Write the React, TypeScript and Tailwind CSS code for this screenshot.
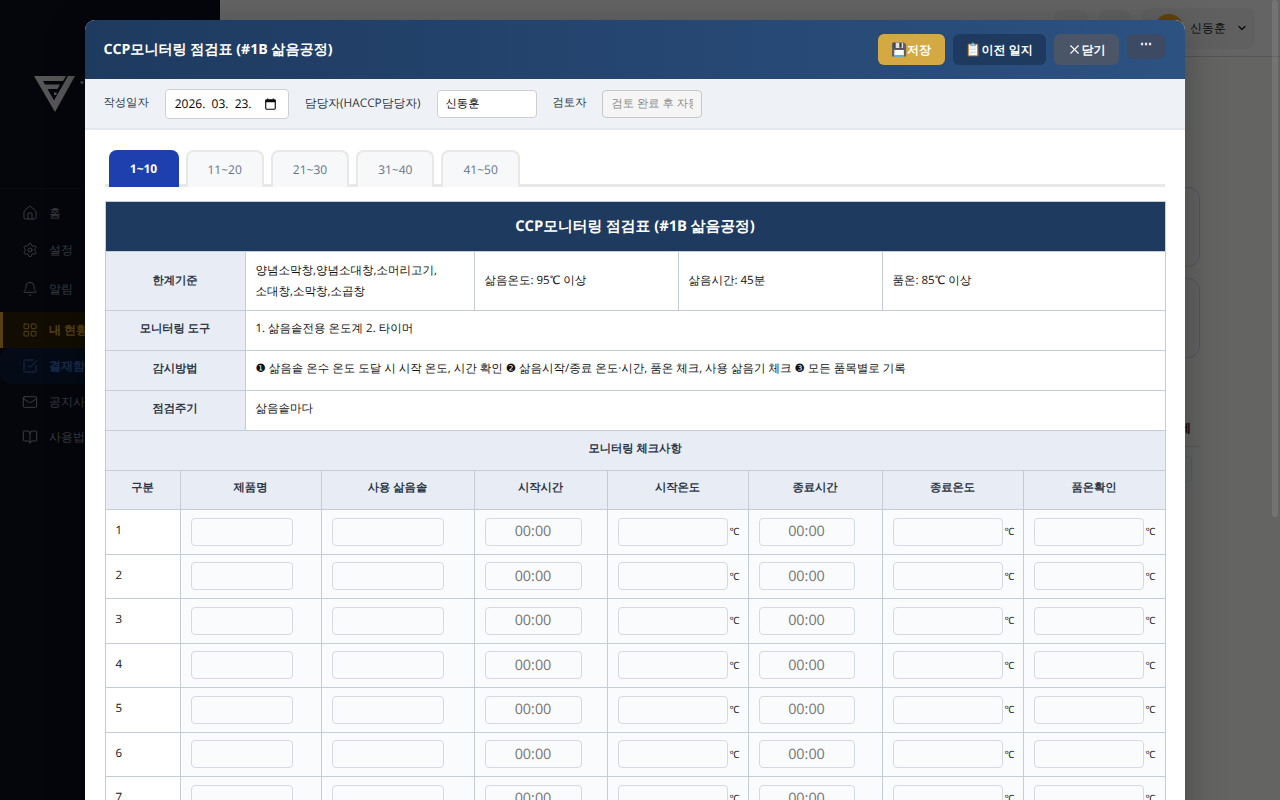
import { Bell, BookOpen, CheckSquare, ChevronDown, Home, LayoutGrid, Mail, Settings, X } from "lucide-react";

const navItems = [
  { label: "홈", icon: Home, top: "mt-0" },
  { label: "설정", icon: Settings, top: "mt-px" },
  { label: "알림", icon: Bell, top: "mt-[3px]" },
  { label: "내 현황", icon: LayoutGrid, top: "mt-[5px]", active: "amber" },
  { label: "결재함", icon: CheckSquare, top: "mt-0", active: "blue" },
  { label: "공지사항", icon: Mail, top: "mt-0" },
  { label: "사용법", icon: BookOpen, top: "mt-[-1px]" },
];

const tabs = ["1~10", "11~20", "21~30", "31~40", "41~50"];
const rows = [1, 2, 3, 4, 5, 6, 7, 8];

const crisp = "[text-rendering:geometricPrecision]";
const line = "border border-[#c4ccd6]";
const labelCell = `${line} bg-[#e8edf5] text-center text-[11.3px] font-semibold text-[#2d3748]`;
const bodyCell = `${line} bg-white px-2.5 text-left text-[11.5px] text-[#111]`;
const headCell = `${line} bg-[#e8edf5] pb-[3px] text-center text-[11.3px] font-semibold text-[#2d3748]`;
const inputCell = `${line} bg-[#fafbfc] px-2.5`;
const fieldClass = `h-7 rounded border border-[#d5dae2] bg-[#fafbfc] px-2 text-center text-[14.4px] outline-none placeholder:text-[#757575] ${crisp}`;

function Logo() {
  return (
    <svg width="50" height="38" viewBox="0 0 50 38">
      <path
        d="M0 0H32L29 5H9L11 8.5H26L23.5 13H13.5L20 24.5L34 0H41L21 36Z"
        fill="#d8d8d8"
      />
      <rect x="20" y="16.5" width="2.5" height="2.5" fill="#d8d8d8" />
      <path d="M46 5.5h4l-2 3z" fill="#d8d8d8" />
    </svg>
  );
}

function Sidebar() {
  return (
    <aside className="flex w-[220px] shrink-0 flex-col bg-[#0a1120]">
      <div className="flex h-[189px] items-start border-b border-[#182030] pt-[76px] pl-[34px]">
        <Logo />
      </div>
      <nav className="flex flex-col pt-[6px]">
        {navItems.map((item) => {
          const Icon = item.icon;
          let tone = "pl-[22px] text-[#8b929e]";
          if (item.active === "amber") tone = "border-l-[3px] border-[#d69e2e] bg-[#2e2207] pl-[19px] font-bold text-[#d69e2e]";
          if (item.active === "blue") tone = "rounded-l-xl bg-[#0c1c38] pl-[22px] font-bold text-[#3b6cc0]";
          return (
            <div key={item.label} className={`flex h-9 items-center gap-[11px] text-xs whitespace-nowrap ${item.top} ${tone}`}>
              <Icon size={16} strokeWidth={1.5} />
              {item.label}
            </div>
          );
        })}
      </nav>
    </aside>
  );
}

function Topbar() {
  return (
    <header className="flex h-[57px] items-center justify-end gap-2.5 border-b border-[#d6d6d4] bg-[#fbfbfa] pr-[25px]">
      <div className="h-9 w-[34px] rounded-lg bg-[#f1f1f0]" />
      <div className="h-9 w-[34px] rounded-lg bg-[#f1f1f0]" />
      <div className="flex h-[41px] w-[113px] items-center gap-[7px] rounded-lg bg-[#f1f1f0] pl-[13px]">
        <div className="h-7 w-7 shrink-0 rounded-full bg-[#f0a818]" />
        <span className="text-xs font-medium text-[#1a1a1a]">신동훈</span>
        <ChevronDown size={12} strokeWidth={2.5} className="ml-[3px] text-[#1a1a1a]" />
      </div>
    </header>
  );
}

function BackPage() {
  return (
    <div className="flex min-w-0 flex-1 flex-col">
      <Topbar />
      <main className="flex flex-col gap-[11px] pt-[130px] pr-[80px] pl-[40px]">
        <div className="h-[80px] rounded-xl border border-[#c9d4ea] bg-[#f7f8fb]" />
        <div className="h-[80px] rounded-xl border border-[#c9d4ea] bg-[#f7f8fb]" />
        <div className="mt-[51px] border-b border-[#e0e0de] pr-[9px] pb-2.5 text-right text-xs font-bold text-[#1a1a1a]">상세</div>
        <div className="-mt-[11px] flex h-[44px] items-center justify-end bg-[#f8f9fb] pr-2">
          <div className="h-[26px] w-10 rounded border border-[#e4e6ea]" />
        </div>
      </main>
    </div>
  );
}

function Celsius() {
  return (
    <div className="flex items-center gap-0.5 pl-2.5">
      <input className={`${fieldClass} w-[110px]`} />
      <span className="text-[10px] text-[#1a1a1a]">℃</span>
    </div>
  );
}

function CheckTable() {
  return (
    <table className="w-[1060px] table-fixed border-collapse">
      <colgroup>
        <col className="w-[75px]" />
        <col className="w-[65px]" />
        <col className="w-[76px]" />
        <col className="w-[153px]" />
        <col className="w-[133px]" />
        <col className="w-[71px]" />
        <col className="w-[70px]" />
        <col className="w-[134px]" />
        <col className="w-[141px]" />
        <col className="w-[142px]" />
      </colgroup>
      <tbody>
        <tr className="h-[50px]">
          <td colSpan={10} className={`${line} bg-[#1e3a5f] text-center text-[14.75px] font-bold text-white`}>
            CCP모니터링 점검표 (#1B 삶음공정)
          </td>
        </tr>
        <tr className="h-[59px]">
          <td colSpan={2} className={labelCell}>한계기준</td>
          <td colSpan={2} className={`${bodyCell} leading-[21px]`}>
            양념소막창,양념소대창,소머리고기,
            <br />
            소대창,소막창,소곱창
          </td>
          <td colSpan={2} className={bodyCell}>삶음온도: 95℃ 이상</td>
          <td colSpan={2} className={bodyCell}>삶음시간: 45분</td>
          <td colSpan={2} className={bodyCell}>품온: 85℃ 이상</td>
        </tr>
        <tr className="h-10">
          <td colSpan={2} className={`${labelCell} pb-[3px]`}>모니터링 도구</td>
          <td colSpan={8} className={`${bodyCell} pb-[3px]`}>1. 삶음솥전용 온도계 2. 타이머</td>
        </tr>
        <tr className="h-10">
          <td colSpan={2} className={`${labelCell} pb-[3px]`}>감시방법</td>
          <td colSpan={8} className={`${bodyCell} pb-[3px]`}>
            ❶ 삶음솥 온수 온도 도달 시 시작 온도, 시간 확인 ❷ 삶음시작/종료 온도·시간, 품온 체크, 사용 삶음기 체크 ❸ 모든 품목별로 기록
          </td>
        </tr>
        <tr className="h-10">
          <td colSpan={2} className={`${labelCell} pb-[3px]`}>점검주기</td>
          <td colSpan={8} className={`${bodyCell} pb-[3px]`}>삶음솥마다</td>
        </tr>
        <tr className="h-10">
          <td colSpan={10} className={headCell}>모니터링 체크사항</td>
        </tr>
        <tr className="h-[39px]">
          <td className={headCell}>구분</td>
          <td colSpan={2} className={headCell}>제품명</td>
          <td className={headCell}>사용 삶음솥</td>
          <td className={headCell}>시작시간</td>
          <td colSpan={2} className={headCell}>시작온도</td>
          <td className={headCell}>종료시간</td>
          <td className={headCell}>종료온도</td>
          <td className={headCell}>품온확인</td>
        </tr>
        {rows.map((n) => (
          <tr key={n} className="h-[44.5px]">
            <td className={`${line} bg-white px-2.5 pb-[2px] text-[11.5px] text-[#111]`}>{n}</td>
            <td colSpan={2} className={inputCell}>
              <input className={`${fieldClass} block w-[102px]`} />
            </td>
            <td className={inputCell}>
              <input className={`${fieldClass} block w-[112px]`} />
            </td>
            <td className={inputCell}>
              <input placeholder="00:00" className={`${fieldClass} block w-[97px]`} />
            </td>
            <td colSpan={2} className={`${line} bg-[#fafbfc]`}>
              <Celsius />
            </td>
            <td className={inputCell}>
              <input placeholder="00:00" className={`${fieldClass} block w-[96px]`} />
            </td>
            <td className={`${line} bg-[#fafbfc]`}>
              <Celsius />
            </td>
            <td className={`${line} bg-[#fafbfc]`}>
              <Celsius />
            </td>
          </tr>
        ))}
      </tbody>
    </table>
  );
}

function Modal() {
  return (
    <div className="absolute top-5 left-[84.5px] flex h-[860px] w-[1100px] flex-col overflow-hidden rounded-[10px] bg-white shadow-[0_10px_40px_rgba(0,0,0,0.3)]">
      <div className="flex h-[59px] shrink-0 items-start justify-between bg-gradient-to-r from-[#1e3a5f] to-[#2c5282] px-5">
        <h2 className="mt-5 -ml-px text-[14.1px] leading-5 font-bold text-white">CCP모니터링 점검표 (#1B 삶음공정)</h2>
        <div className="mt-[14px] flex items-start gap-2">
          <button className={`h-[31px] w-[67px] rounded-md bg-[#d4a843] text-xs font-bold text-white ${crisp}`}>
            <span className="text-[13px]">💾</span>저장
          </button>
          <button className={`h-[31px] w-[93px] rounded-md bg-[#1e3a5f] text-xs font-bold text-white ${crisp}`}>
            <span className="text-[13px]">📋</span>이전 일지
          </button>
          <button className={`flex h-[31px] w-[65px] items-center justify-center rounded-md bg-[#4a5568] text-xs font-bold text-white ${crisp}`}>
            <X size={15} strokeWidth={1.75} />
            닫기
          </button>
          <button className="h-[25px] w-[38px] rounded-md bg-[#3d4a63] pb-1.5 text-xs font-bold text-white">⋯</button>
        </div>
      </div>
      <div className="flex h-[51px] shrink-0 items-center border-b-2 border-[#e2e8f0] bg-[#eef2f7] pl-5 text-[11.3px] text-[#2d3748]">
        <span className="-ml-px">작성일자</span>
        <div className="ml-4 flex h-[30px] w-[124px] items-center justify-between rounded border border-[#cfcfcf] bg-white pr-3 pl-[9px] text-xs whitespace-pre text-black">
          {"2026.  03.  23."}
          <svg width="11" height="12" viewBox="0 0 12 13" fill="none" stroke="#000" strokeWidth="1.2">
            <rect x="0.8" y="1.8" width="10.4" height="10.4" rx="1" />
            <path d="M0.8 3.4H11.2" strokeWidth="2.4" />
            <path d="M3 0.4V2M9 0.4V2" />
          </svg>
        </div>
        <span className="ml-4 text-[11.8px]">담당자(HACCP담당자)</span>
        <input defaultValue="신동훈" className={`ml-4 h-7 w-[100px] rounded border border-[#cfcfcf] bg-white px-2 text-[11.3px] text-black ${crisp}`} />
        <span className="ml-4">검토자</span>
        <input
          disabled
          placeholder="검토 완료 후 자동"
          className={`ml-4 h-7 w-[100px] rounded border border-[#c8c8c8] bg-[#f5f5f5] px-2 text-[11.3px] placeholder:text-[#8a8a8a] ${crisp}`}
        />
      </div>
      <div className="flex min-h-0 flex-1 flex-col px-5 pt-5">
        <div className="flex h-[37px] shrink-0 items-end gap-[7px] border-b-[3px] border-[#e8e8e6] pl-1">
          {tabs.map((t, i) => (
            <div
              key={t}
              className={
                i === 0
                  ? "-mb-[3px] flex h-[37px] w-[70px] items-center justify-center rounded-t-lg bg-[#1e40af] text-xs font-bold text-white"
                  : "-mb-[3px] flex h-[37px] items-center justify-center rounded-t-lg border-2 border-b-0 border-[#e8e8e6] bg-[#f7f8fa] px-5 text-xs font-medium text-[#64748b]"
              }
            >
              {t}
            </div>
          ))}
        </div>
        <div className="mt-[14px]">
          <CheckTable />
        </div>
      </div>
    </div>
  );
}

export default function App() {
  return (
    <div className={`relative flex h-screen w-full overflow-hidden bg-[#f9f9f8] font-['Open_Sans',sans-serif] ${crisp}`}>
      <Sidebar />
      <BackPage />
      <div className="absolute inset-0 bg-black/60" />
      <div className="absolute top-0 right-[2px] h-[517px] w-[6px] rounded bg-white/10" />
      <Modal />
    </div>
  );
}
